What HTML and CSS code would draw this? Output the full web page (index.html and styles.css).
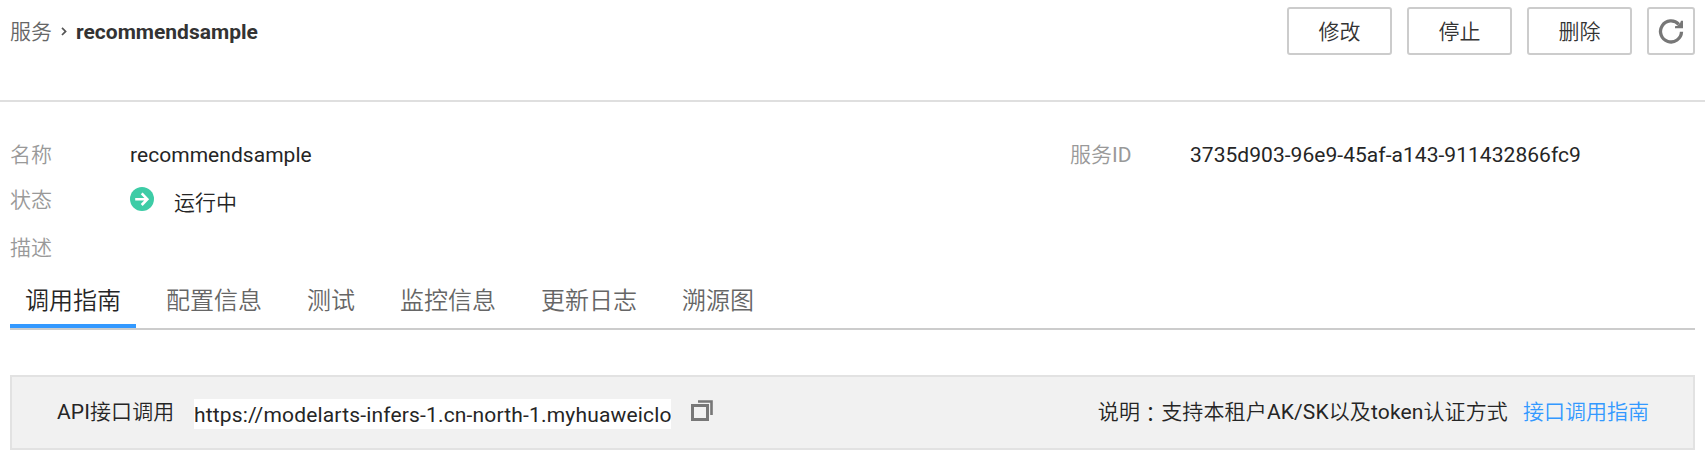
FILE: index.html
```html
<!DOCTYPE html>
<html lang="zh-CN">
<head>
<meta charset="utf-8">
<title>recommendsample</title>
<link rel="stylesheet" href="styles.css">
</head>
<body>
<header class="header">
  <nav class="crumbs">
    <span class="crumb-link">服务</span>
    <svg class="crumb-arrow" width="6" height="9" viewBox="0 0 6 9"><path d="M1 .8 4.6 4.4 1 8" fill="none" stroke="#555" stroke-width="1.7"/></svg>
    <span class="crumb-current">recommendsample</span>
  </nav>
  <div class="actions">
    <button class="btn">修改</button>
    <button class="btn">停止</button>
    <button class="btn">删除</button>
    <button class="btn btn-icon" aria-label="刷新">
      <svg width="26" height="26" viewBox="0 0 26 26"><path d="M20.800 6.400A10.500 10.500 0 1 0 23.500 13.800" fill="none" stroke="#777" stroke-width="3.300"/><path d="M25 2.800v7.500h-8V8.300l2.500-.5L22 5.300l1-2.500z" fill="#777"/></svg>
    </button>
  </div>
</header>
<main class="content">
  <dl class="info">
    <dt>名称</dt><dd class="name">recommendsample</dd>
    <dt>服务<span class="latin">ID</span></dt><dd class="service-id">3735d903-96e9-45af-a143-911432866fc9</dd>
    <dt>状态</dt>
    <dd class="status">
      <svg width="24" height="24" viewBox="0 0 24 24"><circle cx="12" cy="12" r="12" fill="#3dcca6"/><path d="M5.200 12.200H17M11.700 6.400l5.600 5.800-5.600 5.800" fill="none" stroke="#fff" stroke-width="2.600"/></svg>
      <span class="status-text">运行中</span>
    </dd>
    <dt class="row-start">描述</dt>
  </dl>
  <nav class="tabs">
    <a class="tab tab-active">调用指南</a>
    <a class="tab">配置信息</a>
    <a class="tab">测试</a>
    <a class="tab">监控信息</a>
    <a class="tab">更新日志</a>
    <a class="tab">溯源图</a>
  </nav>
  <section class="panel">
    <span class="api-label"><span class="latin">API</span>接口调用</span>
    <span class="url">https://modelarts-infers-1.cn-north-1.myhuaweiclo</span>
    <svg class="copy" width="22" height="22" viewBox="0 0 22 22"><path d="M1.500 5.500h15v14h-15z" fill="none" stroke="#777" stroke-width="3"/><path d="M7 1.500h13.500V15" fill="none" stroke="#777" stroke-width="2.600"/></svg>
    <span class="note">说明<span class="colon" lang="zh-TW">：</span>支持本租户<span class="latin">AK/SK</span>以及<span class="latin">token</span>认证方式</span>
    <a class="guide">接口调用指南</a>
  </section>
</main>
</body>
</html>
```
FILE: styles.css
```css
* { box-sizing: border-box; }
body {
  margin: 0;
  background: #fff;
  color: #252525;
  font: 350 21px/30px Roboto, "Noto Sans CJK SC", sans-serif;
  white-space: nowrap;
}
.latin { font-weight: 400; }
.header {
  display: flex;
  justify-content: space-between;
  align-items: flex-start;
  height: 102px;
  padding: 7px 10px 0;
  border-bottom: 2px solid #dfdfdf;
}
.crumbs { display: flex; align-items: center; padding-top: 10px; }
.crumb-link { color: #666; width: 42px; }
.crumb-arrow { margin: 0 9px; position: relative; top: -1px; }
.crumb-current { color: #333; font-weight: 700; }
.actions { display: flex; gap: 15px; }
.btn {
  width: 105px;
  height: 48px;
  padding: 1px 0 0;
  border: 2px solid #ccc;
  border-radius: 3px;
  background: #fff;
  color: #333;
  font: inherit;
}
.btn-icon { display: flex; align-items: center; justify-content: center; width: 48px; padding: 0; }
.content { padding: 38px 10px 0; }
.info {
  display: grid;
  grid-template-columns: 120px 940px 120px 1fr;
  grid-template-rows: 45px 48px 47px;
  margin: 0;
}
.info dt { color: #999; }
.info dd { margin: 0; }
.info .name, .info .service-id { font-weight: 400; letter-spacing: .04px; }
.row-start { grid-column: 1; }
.status { display: flex; align-items: flex-start; gap: 20px; padding-top: 2px; }
.status-text { padding-top: 1px; }
.tabs { display: flex; gap: 15px; height: 50px; border-bottom: 2px solid #ccc; }
.tab { height: 48px; padding: 6px 15px 0; color: #666; font-size: 24px; }
.tab-active { border-bottom: 4px solid #39f; color: #252525; }
.panel {
  display: flex;
  align-items: flex-start;
  height: 75px;
  margin-top: 45px;
  padding: 20px 44px 0 45px;
  border: 2px solid #e2e2e2;
  background: #f1f1f1;
}
.api-label { width: 137px; letter-spacing: .1px; }
.url { width: 477px; height: 30px; margin-top: 2px; padding-top: 1px; overflow: hidden; background: #fff; font-weight: 400; letter-spacing: .17px; }
.copy { margin: 3px 0 0 20px; }
.note { margin-left: auto; letter-spacing: .13px; }
.colon { font-family: "Noto Sans CJK TC", sans-serif; line-height: 1; vertical-align: -2px; }
.guide { margin-left: 15px; color: #39f; }
```
